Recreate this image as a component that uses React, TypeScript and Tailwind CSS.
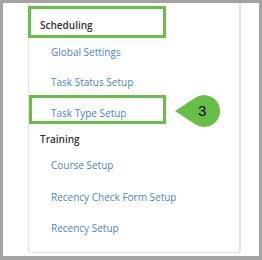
import React from "react";

const rows: { label: string; heading?: boolean; h: number }[] = [
  { label: "Scheduling", heading: true, h: 26 },
  { label: "Global Settings", h: 28 },
  { label: "Task Status Setup", h: 32 },
  { label: "Task Type Setup", h: 30 },
  { label: "Training", heading: true, h: 22 },
  { label: "Course Setup", h: 30 },
  { label: "Recency Check Form Setup", h: 34 },
  { label: "Recency Setup", h: 28 },
];

export default function App() {
  return (
    <div
      className="relative w-[262px] h-[260px] bg-white border-[#a3a3a3] border-l-[3px] border-t-[3px] border-r-[3px] border-b-[4px] overflow-hidden"
      style={{ fontFamily: '"Open Sans", sans-serif' }}
    >
      <div className="ml-[25px] w-[213px] h-[250px] border-x border-b border-[#e2e2e2] border-r-2 rounded-b-[4px] pt-[9px] flex flex-col">
        {rows.map((r) => (
          <div
            key={r.label}
            className={
              r.heading
                ? "flex items-center pl-[11px] text-[10px] font-semibold text-[#333333]"
                : "flex items-center pl-[22px] text-[10px] text-[#4a86c8]"
            }
            style={{ height: r.h }}
          >
            {r.label}
          </div>
        ))}
      </div>

      {/* annotation boxes */}
      <div className="absolute left-[25px] top-[3px] w-[138px] h-[32px] border-[3px] border-[#68bf47]" />
      <div className="absolute left-[26px] top-[92px] w-[137px] h-[29px] border-[3px] border-[#68bf47]" />

      {/* badge */}
      <div className="absolute left-[167px] top-[89px] w-[56px] h-[38px]">
        <svg width="56" height="38" viewBox="0 0 56 38" className="absolute inset-0">
          <path d="M5 19 L25.2 5.7 A16 16 0 1 1 25.2 32.3 Z" fill="#68bf47" />
        </svg>
        <span
          className="absolute left-[28px] top-[11px] text-[15px] leading-none text-black"
          style={{ fontFamily: '"Liberation Sans", Arial, sans-serif' }}
        >
          3
        </span>
      </div>
    </div>
  );
}
